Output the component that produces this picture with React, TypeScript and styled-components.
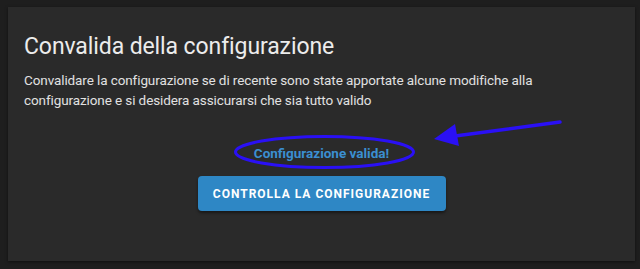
import React from "react";
import styled, { createGlobalStyle } from "styled-components";

const Global = createGlobalStyle`
  html, body {
    margin: 0;
    padding: 0;
    background: #1e1e1e;
  }
  body {
    font-family: Roboto, "Noto Sans", sans-serif;
  }
`;

const Page = styled.div`
  width: 640px;
  height: 269px;
  padding: 7px 5px 8px 8px;
  box-sizing: border-box;
`;

const Card = styled.div`
  position: relative;
  height: 100%;
  background: #2a2a2a;
  box-shadow: 0 1px 3px rgba(0, 0, 0, 0.5);
  box-sizing: border-box;
  padding: 25px 16px 0 16px;
`;

const Title = styled.h1`
  margin: 0;
  font-size: 23px;
  font-weight: 400;
  color: #ececec;
  line-height: 30px;
  letter-spacing: -0.1px;
`;

const Text = styled.p`
  margin: 8px 0 0;
  font-size: 13.5px;
  line-height: 20px;
  color: #e1e1e1;
  max-width: 560px;
  letter-spacing: -0.1px;
`;

const Center = styled.div`
  display: flex;
  flex-direction: column;
  align-items: center;
  margin-top: 33px;
  gap: 13px;
`;

const Status = styled.div`
  font-size: 13.5px;
  font-weight: 700;
  color: #3b8fd1;
  line-height: 20px;
`;

const Button = styled.button`
  font-family: Roboto, "Noto Sans", sans-serif;
  background: #2e87c5;
  border: none;
  border-radius: 4px;
  color: #ffffff;
  font-size: 12px;
  font-weight: 700;
  letter-spacing: 1px;
  text-transform: uppercase;
  height: 35px;
  width: 248px;
  padding: 0;
  box-shadow: 0 2px 3px rgba(0, 0, 0, 0.45);
  cursor: pointer;
`;

const Annotation = styled.svg`
  position: absolute;
  left: -8px;
  top: -7px;
  width: 640px;
  height: 269px;
  pointer-events: none;
`;

export default function App() {
  return (
    <>
      <Global />
      <Page>
        <Card>
          <Title>Convalida della configurazione</Title>
          <Text>
            Convalidare la configurazione se di recente sono state apportate
            alcune modifiche alla configurazione e si desidera assicurarsi che
            sia tutto valido
          </Text>
          <Center>
            <Status>Configurazione valida!</Status>
            <Button>Controlla la configurazione</Button>
          </Center>
          <Annotation viewBox="0 0 640 269">
            <ellipse
              cx="324.5"
              cy="152"
              rx="89"
              ry="15.5"
              fill="none"
              stroke="#2a10f5"
              strokeWidth="3"
            />
            <line
              x1="560"
              y1="122"
              x2="455"
              y2="136"
              stroke="#2a10f5"
              strokeWidth="3.5"
              strokeLinecap="round"
            />
            <polygon points="434,139 455,124 459,146" fill="#2a10f5" />
          </Annotation>
        </Card>
      </Page>
    </>
  );
}
